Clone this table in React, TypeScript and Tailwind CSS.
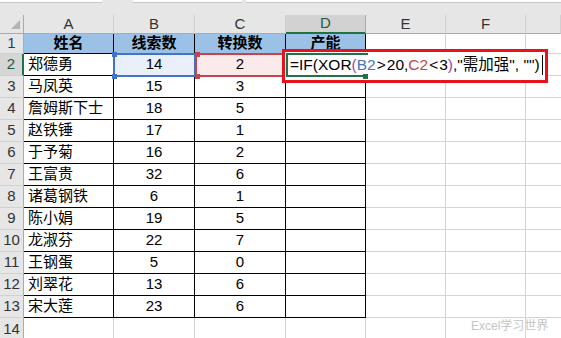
import React from 'react';

const rows: [string, string, string][] = [
  ['郑德勇', '14', '2'],
  ['马凤英', '15', '3'],
  ['詹姆斯下士', '18', '5'],
  ['赵铁锤', '17', '1'],
  ['于予菊', '16', '2'],
  ['王富贵', '32', '6'],
  ['诸葛钢铁', '6', '1'],
  ['陈小娟', '19', '5'],
  ['龙淑芬', '22', '7'],
  ['王钢蛋', '5', '0'],
  ['刘翠花', '13', '6'],
  ['宋大莲', '23', '6'],
];

const cols = ['A', 'B', 'C', 'D', 'E', 'F', ''];
const font = { fontFamily: '"Liberation Sans", "Noto Sans CJK SC", sans-serif' };

function Handle({ x, y, color }: { x: number; y: number; color: string }) {
  return <div className={`absolute w-[5px] h-[5px] ${color}`} style={{ left: x, top: y }} />;
}

export default function App() {
  return (
    <div className="relative w-[561px] h-[338px] overflow-hidden bg-[#e6e6e6] text-[#222]" style={font}>
      {/* formula bar remnants */}
      <div className="h-[15px] flex gap-0">
        <div className="w-[102px] h-[3px] bg-white border-b border-[#c6c6c6]" />
        <div className="w-[31px]" />
        <div className="w-[109px] h-[3px] bg-white border-b border-[#c6c6c6]" />
        <div className="w-[4px]" />
        <div className="flex-1 h-[3px] bg-white border-b border-[#c6c6c6]" />
      </div>

      <div className="grid grid-cols-[24px_90px_81px_91px_80px_80px_80px_35px]">
        {/* column headers */}
        <div className="relative h-[19px] border-r border-b border-[#ababab]">
          <div
            className="absolute left-[11px] top-[5px] w-0 h-0 border-l-[9px] border-l-transparent border-b-[9px] border-b-[#b4b4b4]"
          />
        </div>
        {cols.map((c, i) => (
          <div
            key={c + i}
            className={`h-[19px] flex items-center justify-center text-[15px] ${
              c === 'D'
                ? 'bg-[#d2d2d2] border-b-2 border-b-[#217346] border-r border-r-[#ababab] text-[#1d5c3a]'
                : 'border-r border-r-[#d0d0d0] border-b border-b-[#ababab] text-[#333]'
            }`}
          >
            {c}
          </div>
        ))}

        {/* row 1 */}
        <div className="h-[20px] flex items-center justify-center text-[15px] text-[#1f3b7a] border-r border-b border-[#ababab] border-b-[#d0d0d0]">
          1
        </div>
        {['姓名', '线索数', '转换数', '产能'].map((h) => (
          <div
            key={h}
            className="h-[20px] bg-[#9bc2e6] border-r border-b border-black flex items-center justify-center text-[15px] font-bold text-black"
          >
            {h}
          </div>
        ))}
        <div className="h-[20px] bg-white border-r border-b border-[#d4d4d4]" />
        <div className="h-[20px] bg-white border-r border-b border-[#d4d4d4]" />
        <div className="h-[20px] bg-white border-b border-[#d4d4d4]" />

        {rows.map((r, i) => {
          const n = i + 2;
          const sel = n === 2;
          return (
            <React.Fragment key={n}>
              <div
                className={`h-[22px] flex items-center justify-center text-[15px] border-b border-b-[#d0d0d0] ${
                  sel
                    ? 'bg-[#d6d6d6] text-[#1d5c3a] border-r-2 border-r-[#217346]'
                    : 'text-[#333] border-r border-r-[#ababab]'
                }`}
              >
                {n}
              </div>
              <div className="h-[22px] bg-white border-r border-b border-black flex items-center pl-[4px] text-[15px] text-black whitespace-nowrap">
                {r[0]}
              </div>
              <div
                className={`h-[22px] border-r border-b border-black flex items-center justify-center text-[15px] text-black ${
                  sel ? 'bg-[#eaf0fa]' : 'bg-white'
                }`}
              >
                {r[1]}
              </div>
              <div
                className={`h-[22px] border-r border-b border-black flex items-center justify-center text-[15px] text-black ${
                  sel ? 'bg-[#fbeaea]' : 'bg-white'
                }`}
              >
                {r[2]}
              </div>
              <div className="h-[22px] bg-white border-r border-b border-black" />
              <div className="h-[22px] bg-white border-r border-b border-[#d4d4d4]" />
              <div className="h-[22px] bg-white border-r border-b border-[#d4d4d4]" />
              <div className="h-[22px] bg-white border-b border-[#d4d4d4]" />
            </React.Fragment>
          );
        })}

        {/* row 14 */}
        <div className="h-[22px] flex items-center justify-center text-[15px] text-[#333] border-r border-[#ababab]">
          14
        </div>
        {[0, 1, 2, 3, 4, 5].map((k) => (
          <div key={k} className="h-[22px] bg-white border-r border-[#d4d4d4]" />
        ))}
        <div className="h-[22px] bg-white" />
      </div>

      {/* B2 reference range */}
      <div className="absolute left-[113px] top-[53px] w-[83px] h-[24px] border-2 border-[#4472c4]" />
      <Handle x={112} y={52} color="bg-[#4472c4]" />
      <Handle x={112} y={74} color="bg-[#4472c4]" />

      {/* C2 reference range */}
      <div className="absolute left-[195px] top-[53px] w-[92px] h-[24px] border-2 border-[#c7424b]" />
      <Handle x={195} y={52} color="bg-[#c7424b]" />
      <Handle x={195} y={74} color="bg-[#c7424b]" />

      {/* editing box */}
      <div className="absolute left-[284px] top-[51px] w-[262px] h-[30px] bg-white" />
      <div className="absolute left-[286px] top-[53px] w-[82px] h-[24px] border-l-2 border-t-2 border-b-2 border-[#217346]" />
      <Handle x={363} y={74} color="bg-[#217346]" />

      <div className="absolute left-[290px] top-[53px] h-[24px] flex items-center text-[15.5px] text-black whitespace-nowrap">
        <span>=IF(XOR</span>
        <span className="text-[#a0479e]">(</span>
        <span className="text-[#4472c4]">B2</span>
        <span className="mx-[1px]">&gt;</span>
        <span>20,</span>
        <span className="text-[#c7424b]">C2</span>
        <span className="mx-[1px]">&lt;</span>
        <span>3</span>
        <span className="text-[#a0479e]">)</span>
        <span>,"需加强", "")</span>
        <span className="inline-block w-px h-[20px] bg-black ml-[2px]" />
      </div>

      {/* annotation */}
      <div className="absolute left-[282px] top-[49px] w-[266px] h-[34px] border-[3px] border-[#e8111d]" />

      {/* watermark */}
      <div
        className="absolute left-[471px] top-[317px] text-[12px] text-[#c4c4c4] whitespace-nowrap"
        style={{ textShadow: '0 0 1px #fff' }}
      >
        Excel学习世界
      </div>
    </div>
  );
}
